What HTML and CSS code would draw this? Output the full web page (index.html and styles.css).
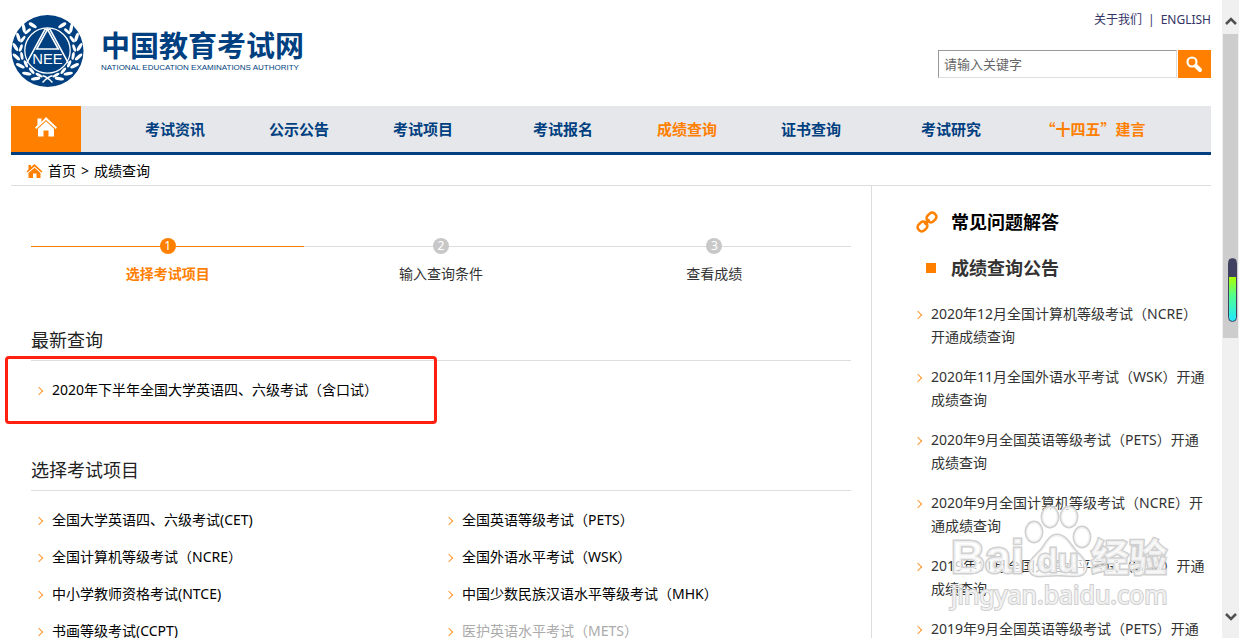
FILE: index.html
```html
<!DOCTYPE html>
<html lang="zh-CN">
  <head>
    <meta charset="UTF-8" />
    <meta name="viewport" content="width=device-width, initial-scale=1.0" />
    <title>成绩查询 - 中国教育考试网</title>
    <link rel="stylesheet" href="styles.css">
  </head>
  <body>
    <div class="page">
      <header class="header">
        <a class="logo" href="#">
          <svg class="emblem" viewBox="0 0 74 74" aria-hidden="true">
            <defs>
              <g id="laurel" fill="#fff">
                <ellipse cx="22" cy="11" rx="4.6" ry="1.8" transform="rotate(32 22 11)" />
                <ellipse cx="13" cy="14" rx="4.8" ry="1.7" transform="rotate(80 13 14)" />
                <ellipse cx="17" cy="17" rx="4" ry="1.5" transform="rotate(-42 17 17)" />
                <ellipse cx="7.5" cy="23" rx="4.8" ry="1.7" transform="rotate(72 7.5 23)" />
                <ellipse cx="12" cy="25" rx="4" ry="1.5" transform="rotate(-55 12 25)" />
                <ellipse cx="4.5" cy="33" rx="4.8" ry="1.7" transform="rotate(58 4.5 33)" />
                <ellipse cx="10" cy="34" rx="4" ry="1.5" transform="rotate(-72 10 34)" />
                <ellipse cx="5.5" cy="43" rx="4.8" ry="1.7" transform="rotate(42 5.5 43)" />
                <ellipse cx="11" cy="42" rx="4" ry="1.5" transform="rotate(80 11 42)" />
                <ellipse cx="9.5" cy="52" rx="4.8" ry="1.7" transform="rotate(26 9.5 52)" />
                <ellipse cx="15" cy="50" rx="4" ry="1.5" transform="rotate(66 15 50)" />
                <ellipse cx="16" cy="60" rx="4.8" ry="1.7" transform="rotate(10 16 60)" />
                <ellipse cx="21" cy="57" rx="4" ry="1.5" transform="rotate(50 21 57)" />
                <ellipse cx="25" cy="65" rx="4.8" ry="1.7" transform="rotate(-8 25 65)" />
                <ellipse cx="28.5" cy="61.5" rx="4" ry="1.4" transform="rotate(28 28.5 61.5)" />
              </g>
            </defs>
            <circle cx="37" cy="37" r="36.5" fill="#003f80" />
            <use href="#laurel" />
            <use href="#laurel" transform="translate(74 0) scale(-1 1)" />
            <path d="M32 62Q37 63 42 69M42 62Q37 63 32 69" fill="none" stroke="#fff" stroke-width="1.5" />
            <circle cx="37" cy="36.5" r="23" fill="#003f80" stroke="#fff" stroke-width="1.3" />
            <path d="M16 49L34.5 15H39.5L58 49M37 15L26 35H48Z" fill="none" stroke="#fff" stroke-width="1.6" />
            <text class="emblem-text" x="37" y="50" text-anchor="middle">NEE</text>
          </svg>
          <span class="logo-text">
            <span class="logo-cn">中国教育考试网</span>
            <span class="logo-en">NATIONAL EDUCATION EXAMINATIONS AUTHORITY</span>
          </span>
        </a>
        <div class="tools">
          <div class="top-links">
            <a href="#">关于我们</a>
            <span>|</span>
            <a href="#">ENGLISH</a>
          </div>
          <form class="search">
            <input class="search-input" type="text" placeholder="请输入关键字" aria-label="请输入关键字" />
            <button class="search-btn" type="button" aria-label="搜索">
              <svg width="17" height="17" viewBox="0 0 17 17">
                <circle cx="6" cy="6" r="4.5" fill="none" stroke="#fff" stroke-width="2.2" />
                <path d="M10 10L14 14" stroke="#fff" stroke-width="4" stroke-linecap="round" />
              </svg>
            </button>
          </form>
        </div>
      </header>

      <nav class="nav">
        <a class="home" href="#" aria-label="首页">
          <svg width="24" height="22" viewBox="0 0 24 22" fill="#fff">
            <path d="M3.5 2.500H7.500V6L12 1L23 11.500L21.700 13L12 4L2.300 13L1 11.500L3.500 9Z" />
            <path d="M4 12.700L12 5.300L20 12.700V20.500H14.500V14.500H9.500V20.500H4Z" />
          </svg>
        </a>
        <div class="nav-group">
          <a href="#">考试资讯</a>
          <a href="#">公示公告</a>
          <a href="#">考试项目</a>
        </div>
        <div class="nav-group">
          <a href="#">考试报名</a>
          <a class="active" href="#">成绩查询</a>
          <a href="#">证书查询</a>
        </div>
        <div class="nav-group">
          <a href="#">考试研究</a>
          <a class="active wide" href="#">“十四五”建言</a>
        </div>
      </nav>

      <div class="crumbs">
        <svg width="17" height="16" viewBox="0 0 17 16" fill="#ff8000">
          <path d="M2.500 2H5V4L8.500 1L16.500 8.500L15.500 9.500L8.500 3.500L1.500 9.500L0.500 8.500L2.500 6.500Z" />
          <path d="M2.500 10L8.500 4.700L14.500 10V15H10.500V10.500H7V15H2.500Z" />
        </svg>
        <a href="#">首页</a>
        <span>&gt;</span>
        <a href="#">成绩查询</a>
      </div>

      <div class="content">
        <main class="main">
          <ol class="steps">
            <li class="step current"><span class="num">1</span>选择考试项目</li>
            <li class="step"><span class="num">2</span>输入查询条件</li>
            <li class="step"><span class="num">3</span>查看成绩</li>
          </ol>

          <section class="block latest">
            <h2>最新查询</h2>
            <ul class="list">
              <li><a href="#">2020年下半年全国大学英语四、六级考试（含口试）</a></li>
            </ul>
            <div class="mark"></div>
          </section>

          <section class="block">
            <h2>选择考试项目</h2>
            <ul class="list two-cols">
              <li><a href="#">全国大学英语四、六级考试(CET)</a></li>
              <li><a href="#">全国英语等级考试（PETS）</a></li>
              <li><a href="#">全国计算机等级考试（NCRE）</a></li>
              <li><a href="#">全国外语水平考试（WSK）</a></li>
              <li><a href="#">中小学教师资格考试(NTCE)</a></li>
              <li><a href="#">中国少数民族汉语水平等级考试（MHK）</a></li>
              <li><a href="#">书画等级考试(CCPT)</a></li>
              <li><a class="off" href="#">医护英语水平考试（METS）</a></li>
            </ul>
          </section>
        </main>

        <aside class="side">
          <h2>
            <svg width="22" height="22" viewBox="0 0 22 22" fill="none" stroke="#ff8000" stroke-width="2.500">
              <rect x="-5" y="-4" width="10" height="8" rx="3.500" transform="translate(6.500 15.500) rotate(-45)" />
              <rect x="-5" y="-4" width="10" height="8" rx="3.500" transform="translate(15.500 6.500) rotate(-45)" />
              <path d="M8.500 13.500L13.500 8.500" />
            </svg>
            常见问题解答
          </h2>
          <h3>成绩查询公告</h3>
          <ul class="notices">
            <li><a href="#">2020年12月全国计算机等级考试（NCRE）开通成绩查询</a></li>
            <li><a href="#">2020年11月全国外语水平考试（WSK）开通成绩查询</a></li>
            <li><a href="#">2020年9月全国英语等级考试（PETS）开通成绩查询</a></li>
            <li><a href="#">2020年9月全国计算机等级考试（NCRE）开通成绩查询</a></li>
            <li><a href="#">2019年11月全国外语水平考试（WSK）开通成绩查询</a></li>
            <li><a href="#">2019年9月全国英语等级考试（PETS）开通成绩查询</a></li>
          </ul>
          <svg class="watermark" width="230" height="110" viewBox="0 0 230 110" aria-hidden="true">
            <g class="wm">
              <ellipse cx="88" cy="29" rx="8" ry="10" />
              <ellipse cx="104" cy="14" rx="8" ry="10" />
              <ellipse cx="123" cy="14" rx="8" ry="10" />
              <ellipse cx="136" cy="34" rx="8" ry="10" />
              <path d="M111 32C119 32 123 40 128 46C134 53 141 58 140 66C138 76 126 72 111 72C98 72 88 76 84 68C81 58 90 53 96 46C101 39 104 32 111 32Z" />
              <text class="wm-bai" x="5" y="70">Bai</text>
              <text class="wm-du" x="91" y="69">du</text>
              <text class="wm-cn" x="145" y="68">经验</text>
              <text class="wm-url" x="5" y="101">jingyan.baidu.com</text>
            </g>
          </svg>
        </aside>
      </div>
    </div>

    <div class="scrollbar">
      <svg width="12" height="10" viewBox="0 0 12 10"><path d="M1 8L6 3L11 8" fill="none" stroke="#505050" stroke-width="2.500" /></svg>
      <div class="track">
        <div class="thumb">
          <div class="meter"></div>
        </div>
      </div>
      <svg width="12" height="10" viewBox="0 0 12 10"><path d="M1 2L6 7L11 2" fill="none" stroke="#505050" stroke-width="2.500" /></svg>
    </div>
  </body>
</html>
```
FILE: styles.css
```css
* {
  box-sizing: border-box;
}
body {
  margin: 0;
  display: flex;
  height: 100vh;
  overflow: hidden;
  background: #fff;
  color: #000;
  font: 14px/20px "Noto Sans", "Noto Sans CJK SC", sans-serif;
}
a {
  color: inherit;
  text-decoration: none;
}
a:hover {
  color: #ff8000;
}
ul,
ol {
  list-style: none;
  margin: 0;
  padding: 0;
}
h2,
h3 {
  margin: 0;
}
.page {
  flex: 1;
  min-width: 0;
  padding: 0 11px;
}

/* header */
.header {
  display: flex;
  justify-content: space-between;
  height: 106px;
}
.logo {
  display: flex;
  gap: 17px;
  padding-top: 14px;
  color: #003f80;
}
.emblem {
  width: 73px;
  height: 74px;
}
.emblem-text {
  font: 15px "Liberation Sans", sans-serif;
  fill: #fff;
}
.logo-text {
  display: flex;
  flex-direction: column;
  padding-top: 14px;
}
.logo-cn {
  font: bold 29px/32px "Noto Sans CJK SC", sans-serif;
}
.logo-en {
  font: 8px/16px "Liberation Sans", sans-serif;
  white-space: nowrap;
}
.tools {
  display: flex;
  flex-direction: column;
  align-items: flex-end;
  gap: 20px;
  padding-top: 10px;
}
.top-links {
  display: flex;
  gap: 6px;
  font-size: 12px;
  color: #333366;
}
.search {
  display: flex;
  gap: 1px;
}
.search-input {
  width: 239px;
  height: 28px;
  padding: 0 5px;
  border: 1px solid #ddd;
  border-top-color: #999;
  border-left-color: #999;
  font: inherit;
  font-size: 13px;
}
.search-input::placeholder {
  color: #666;
}
.search-btn {
  display: flex;
  align-items: center;
  justify-content: center;
  width: 33px;
  height: 28px;
  padding: 0;
  border: none;
  background: #ff8000;
  cursor: pointer;
}

/* navigation */
.nav {
  display: flex;
  gap: 16px;
  height: 49px;
  border-bottom: 3px solid #003f80;
  background: #e6e7eb;
  color: #003f80;
  font: bold 15px/46px "Noto Sans CJK SC", sans-serif;
}
.home {
  display: flex;
  justify-content: center;
  width: 70px;
  margin-right: 16px;
  padding-top: 10px;
  background: #ff8000;
}
.nav-group {
  display: flex;
}
.nav-group a {
  width: 124px;
  text-align: center;
}
.nav-group .wide {
  width: 160px;
}
.active {
  color: #ff8000;
}

.crumbs {
  display: flex;
  align-items: center;
  gap: 5px;
  height: 31px;
  padding: 2px 0 0 15px;
  border-bottom: 1px solid #ddd;
}

/* columns */
.content {
  display: flex;
}
.main {
  flex: 1;
  padding: 0 20px;
}
.steps {
  display: flex;
  padding-top: 52px;
}
.step {
  flex: 1;
  display: flex;
  flex-direction: column;
  align-items: center;
  gap: 10px;
  color: #333;
  background: linear-gradient(#ddd, #ddd) 0 8px / 100% 1px no-repeat;
}
.step.current {
  color: #ff8000;
  font-weight: bold;
  background-image: linear-gradient(#ff8000, #ff8000);
}
.num {
  width: 16px;
  height: 16px;
  border-radius: 50%;
  background: #c8c8c8;
  color: #fff;
  font-size: 12px;
  font-weight: normal;
  line-height: 16px;
  text-align: center;
}
.current .num {
  background: #ff8000;
}
.block {
  position: relative;
  padding-top: 42px;
}
.block h2 {
  padding-bottom: 6px;
  border-bottom: 1px solid #ddd;
  color: #222;
  font-size: 18px;
  font-weight: normal;
  line-height: 28px;
}
.list {
  padding-top: 10px;
}
.list li {
  display: flex;
  line-height: 37px;
}
.two-cols {
  display: grid;
  grid-template-columns: 1fr 1fr;
}
.list li::before,
.notices li::before {
  content: "";
  flex: none;
  width: 5px;
  height: 5px;
  margin: 17px 10px 0 5px;
  border-top: 1px solid #ff9830;
  border-right: 1px solid #ff9830;
  transform: rotate(45deg);
}
.off {
  color: #aaa;
}
.latest {
  padding-bottom: 6px;
}
.mark {
  position: absolute;
  top: 72px;
  left: -26px;
  width: 432px;
  height: 68px;
  border: 3px solid #ff2010;
  border-radius: 4px;
}

/* right column */
.side {
  position: relative;
  width: 340px;
  padding: 22px 0 0 39px;
  border-left: 1px solid #ddd;
  color: #333;
}
.side h2,
.side h3 {
  display: flex;
  align-items: center;
  font-size: 18px;
  line-height: 28px;
}
.side h2 {
  gap: 13px;
  padding-left: 5px;
  color: #000;
}
.side h3 {
  gap: 15px;
  margin-top: 18px;
  padding-left: 15px;
}
.side h3::before {
  content: "";
  width: 10px;
  height: 10px;
  background: #ff8000;
}
.notices {
  display: flex;
  flex-direction: column;
  gap: 17px;
  margin-left: -1px;
  padding-top: 20px;
}
.notices li {
  display: flex;
  line-height: 23px;
}
.notices li::before {
  margin-top: 10px;
}
.watermark {
  position: absolute;
  top: 317px;
  left: 74px;
}
.wm {
  fill: #fff;
  fill-opacity: 0.7;
  stroke: #d0d0d0;
  stroke-width: 3px;
  paint-order: stroke;
}
.wm-bai {
  font: bold 47px "Liberation Sans", sans-serif;
}
.wm-du {
  font: bold 34px "Liberation Sans", sans-serif;
}
.wm-cn {
  font: bold 38px "Noto Sans CJK SC", sans-serif;
}
.wm-url {
  font: 25px "Noto Sans", sans-serif;
  stroke-width: 2px;
}

/* scrollbar */
.scrollbar {
  display: flex;
  flex-direction: column;
  align-items: center;
  width: 17px;
  padding: 16px 0;
  background: #f0f0f0;
}
.track {
  flex: 1;
  padding-top: 8px;
}
.thumb {
  display: flex;
  justify-content: flex-end;
  width: 15px;
  height: 304px;
  padding: 224px 1px 0 0;
  background: #cdcdcd;
}
.meter {
  width: 9px;
  height: 64px;
  border: 1px solid #404060;
  border-radius: 5px;
  background: linear-gradient(#404060 18px, #aaff00 18px, #50ff90 60%, #20e8ff);
}
```
